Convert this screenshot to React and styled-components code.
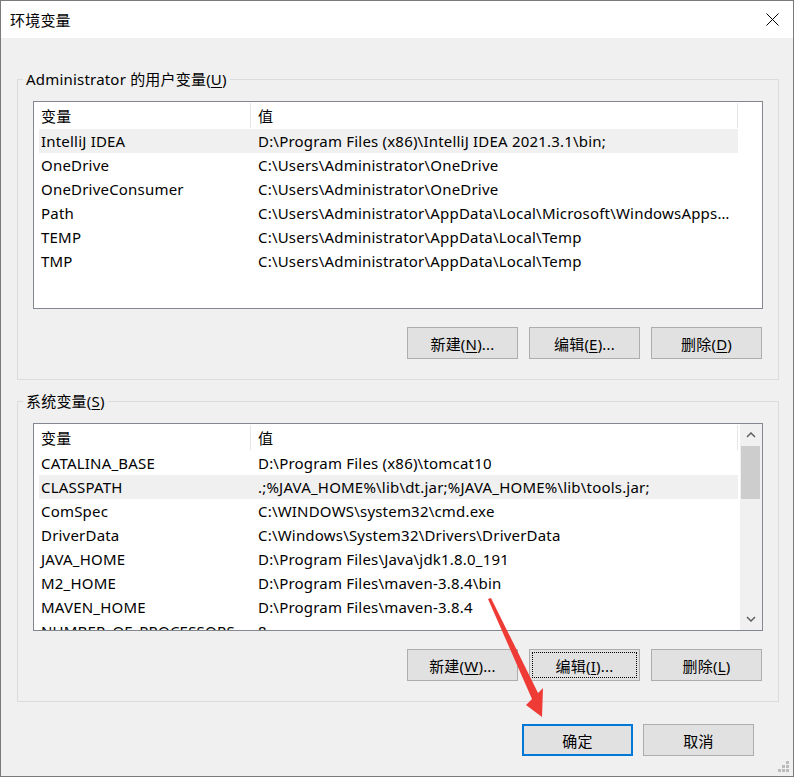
import React from "react";
import styled, { createGlobalStyle } from "styled-components";

const GlobalStyle = createGlobalStyle`
  html, body {
    margin: 0;
    padding: 0;
    background: #f0f0f0;
  }
  body {
    font-family: "Noto Sans", "Noto Sans CJK SC", sans-serif;
    font-size: 15px;
    letter-spacing: 0.2px;
    color: #000;
  }
`;

const userVars = [
  ["IntelliJ IDEA", "D:\\Program Files (x86)\\IntelliJ IDEA 2021.3.1\\bin;"],
  ["OneDrive", "C:\\Users\\Administrator\\OneDrive"],
  ["OneDriveConsumer", "C:\\Users\\Administrator\\OneDrive"],
  ["Path", "C:\\Users\\Administrator\\AppData\\Local\\Microsoft\\WindowsApps;%IntelliJ IDEA%;"],
  ["TEMP", "C:\\Users\\Administrator\\AppData\\Local\\Temp"],
  ["TMP", "C:\\Users\\Administrator\\AppData\\Local\\Temp"],
];

const systemVars = [
  ["CATALINA_BASE", "D:\\Program Files (x86)\\tomcat10"],
  ["CLASSPATH", ".;%JAVA_HOME%\\lib\\dt.jar;%JAVA_HOME%\\lib\\tools.jar;"],
  ["ComSpec", "C:\\WINDOWS\\system32\\cmd.exe"],
  ["DriverData", "C:\\Windows\\System32\\Drivers\\DriverData"],
  ["JAVA_HOME", "D:\\Program Files\\Java\\jdk1.8.0_191"],
  ["M2_HOME", "D:\\Program Files\\maven-3.8.4\\bin"],
  ["MAVEN_HOME", "D:\\Program Files\\maven-3.8.4"],
  ["NUMBER_OF_PROCESSORS", "8"],
];

// Window chrome
const Window = styled.div`
  position: relative;
  width: 794px;
  height: 777px;
  box-sizing: border-box;
  border: 1px solid #7a7a7a;
  background: #f0f0f0;
  display: flex;
  flex-direction: column;
  overflow: hidden;
`;

const TitleBar = styled.div`
  height: 37px;
  flex-shrink: 0;
  background: #fff;
  display: flex;
  align-items: center;
  justify-content: space-between;
  padding: 0 14px 0 9px;
`;

const Title = styled.span`
  font-size: 15px;
  line-height: 20px;
`;

const Content = styled.div`
  padding: 31px 14px 0 16px;
  display: flex;
  flex-direction: column;
`;

// Group box
const Group = styled.fieldset`
  margin: ${(p) => (p.$first ? "0" : "11px 0 0")};
  padding: 12px 15px 20px;
  border: 1px solid #dcdcdc;
  min-width: 0;
`;

const Legend = styled.legend`
  margin-left: -10px;
  padding: 0 3px;
  line-height: 20px;
  font-size: 15px;
`;

const Key = styled.span`
  text-decoration: underline;
  text-underline-offset: 2px;
`;

// List view
const ListView = styled.div`
  height: 208px;
  box-sizing: border-box;
  border: 1px solid #828790;
  background: #fff;
  display: flex;
`;

const ListBody = styled.div`
  flex: 1;
  min-width: 0;
  overflow: hidden;
`;

const Header = styled.div`
  height: 27px;
  display: flex;
`;

const HeaderCell = styled.div`
  width: ${(p) => p.$width}px;
  flex-shrink: 0;
  box-sizing: border-box;
  padding-left: 7px;
  line-height: 26px;
  border-right: 1px solid #e5e5e5;
  margin: 1px 0;
`;

const Row = styled.div`
  height: 24px;
  width: 699px;
  margin-left: 5px;
  display: flex;
  align-items: center;
  background: ${(p) => (p.$selected ? "#f0f0f0" : "transparent")};
`;

const Cell = styled.div`
  width: ${(p) => p.$width}px;
  flex-shrink: 0;
  box-sizing: border-box;
  padding-left: ${(p) => p.$pad}px;
  padding-right: 5px;
  white-space: nowrap;
  overflow: hidden;
  text-overflow: ellipsis;
  line-height: 24px;
`;

// Scroll bar
const ScrollBar = styled.div`
  width: 22px;
  flex-shrink: 0;
  background: #f0f0f0;
  display: flex;
  flex-direction: column;
`;

const ScrollArrow = styled.div`
  height: 22px;
  display: flex;
  align-items: center;
  justify-content: center;
`;

const Thumb = styled.div`
  height: 53px;
  margin: 0 2px 0 1px;
  background: #cdcdcd;
`;

const Track = styled.div`
  flex: 1;
`;

// Buttons
const ButtonRow = styled.div`
  display: flex;
  justify-content: flex-end;
  gap: 11px;
  margin-top: 18px;
  padding-right: 1px;
`;

const Button = styled.button`
  width: 111px;
  height: 32px;
  box-sizing: border-box;
  background: #e1e1e1;
  border: ${(p) => (p.$default ? "2px solid #0078d7" : "1px solid #adadad")};
  font-family: inherit;
  font-size: 15px;
  letter-spacing: 0.2px;
  color: #000;
  padding: 0;
  outline: ${(p) => (p.$focused ? "1px dotted #000" : "none")};
  outline-offset: -4px;
`;

const Footer = styled.div`
  display: flex;
  justify-content: flex-end;
  gap: 10px;
  margin: 22px 25px 0 0;
`;

const SizeGrip = styled.svg`
  position: absolute;
  right: 3px;
  bottom: 3px;
`;

const Annotation = styled.svg`
  position: absolute;
  left: -1px;
  top: -1px;
  pointer-events: none;
`;

const Chevron = ({ up }) => (
  <svg width="10" height="6" viewBox="0 0 10 6">
    <path
      d={up ? "M1 5 L5 1 L9 5" : "M1 1 L5 5 L9 1"}
      fill="none"
      stroke="#606060"
      strokeWidth="1.5"
    />
  </svg>
);

const VarList = ({ items, selected, scroll }) => (
  <ListView>
    <ListBody>
      <Header>
        <HeaderCell $width={217}>变量</HeaderCell>
        <HeaderCell $width={487}>值</HeaderCell>
      </Header>
      {items.map(([name, value], i) => (
        <Row key={name} $selected={i === selected}>
          <Cell $width={212} $pad={2}>{name}</Cell>
          <Cell $width={487} $pad={7}>{value}</Cell>
        </Row>
      ))}
    </ListBody>
    {scroll && (
      <ScrollBar>
        <ScrollArrow><Chevron up /></ScrollArrow>
        <Thumb />
        <Track />
        <ScrollArrow><Chevron /></ScrollArrow>
      </ScrollBar>
    )}
  </ListView>
);

const Actions = ({ keys, focus }) => (
  <ButtonRow>
    <Button>新建(<Key>{keys[0]}</Key>)...</Button>
    <Button $focused={focus}>编辑(<Key>{keys[1]}</Key>)...</Button>
    <Button>删除(<Key>{keys[2]}</Key>)</Button>
  </ButtonRow>
);

export default function App() {
  return (
    <>
      <GlobalStyle />
      <Window>
        <TitleBar>
          <Title>环境变量</Title>
          <svg width="13" height="13" viewBox="0 0 13 13">
            <path d="M0.5 0.5 L12.5 12.5 M12.5 0.5 L0.5 12.5" stroke="#000" strokeWidth="1" />
          </svg>
        </TitleBar>

        <Content>
          <Group $first>
            <Legend>Administrator 的用户变量(<Key>U</Key>)</Legend>
            <VarList items={userVars} selected={0} />
            <Actions keys={["N", "E", "D"]} />
          </Group>

          <Group>
            <Legend>系统变量(<Key>S</Key>)</Legend>
            <VarList items={systemVars} selected={1} scroll />
            <Actions keys={["W", "I", "L"]} focus />
          </Group>

          <Footer>
            <Button $default>确定</Button>
            <Button>取消</Button>
          </Footer>
        </Content>

        <SizeGrip width="12" height="12" viewBox="0 0 12 12">
          {[[8, 0], [4, 4], [8, 4], [0, 8], [4, 8], [8, 8]].map(([x, y]) => (
            <rect key={`${x}-${y}`} x={x} y={y} width="3" height="3" fill="#bcbcbc" />
          ))}
        </SizeGrip>

        <Annotation width="794" height="777" viewBox="0 0 794 777">
          <polygon
            points="488,599 491,598 538,693 543,688 542,717 526,705 532,699"
            fill="#ef3b36"
          />
        </Annotation>
      </Window>
    </>
  );
}
